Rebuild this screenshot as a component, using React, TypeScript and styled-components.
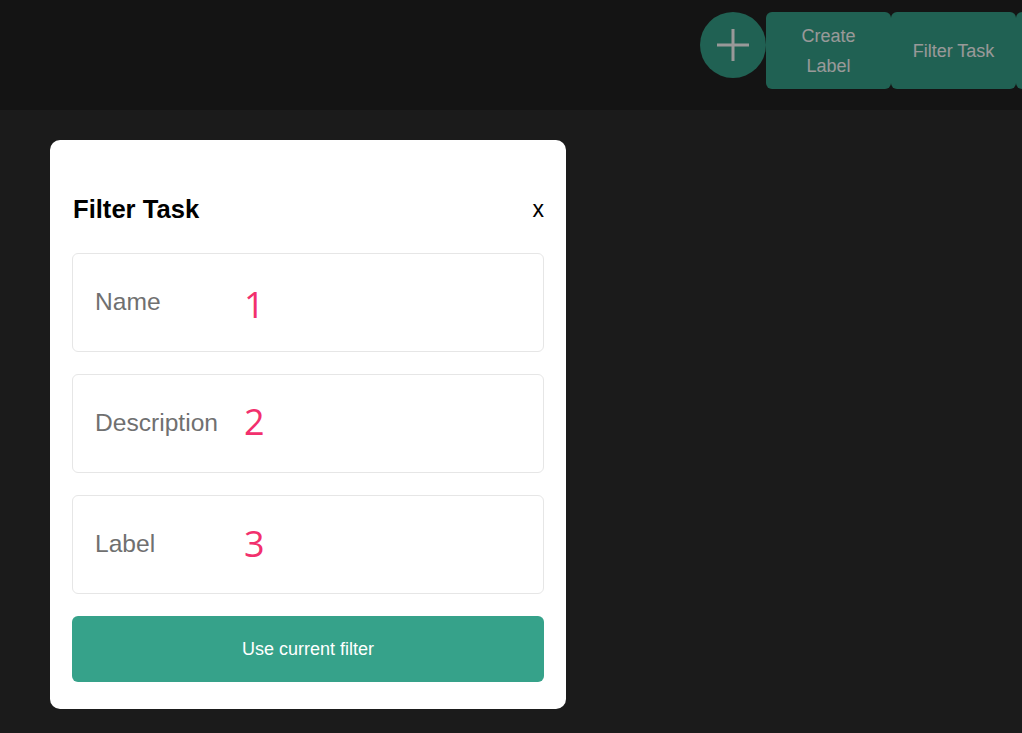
import React from "react";
import styled, { createGlobalStyle } from "styled-components";

const GlobalStyle = createGlobalStyle`
  html, body {
    margin: 0;
    padding: 0;
    height: 100%;
    overflow: hidden;
    background: #2d2d2d;
    font-family: "Liberation Sans", Arial, sans-serif;
  }
  #root { height: 100%; }
  * { box-sizing: border-box; }
`;

const Page = styled.div`
  height: 100%;
  display: flex;
  flex-direction: column;
`;

const Header = styled.header`
  height: 110px;
  flex-shrink: 0;
  background: #222222;
  display: flex;
  align-items: flex-start;
  padding: 12px 0 0 700px;
  overflow: hidden;
`;

const Actions = styled.div`
  display: flex;
  align-items: flex-start;
  flex-shrink: 0;
`;

const AddButton = styled.button`
  width: 66px;
  height: 66px;
  flex-shrink: 0;
  border: none;
  border-radius: 50%;
  background: #36a28a;
  display: flex;
  align-items: center;
  justify-content: center;
  padding: 0;
`;

const HeaderButton = styled.button`
  width: 125px;
  height: 77px;
  flex-shrink: 0;
  border: none;
  border-radius: 6px;
  background: #36a28a;
  color: #ffffff;
  font-family: "Liberation Sans", Arial, sans-serif;
  font-size: 18px;
  line-height: 30px;
  padding: 0 20px;
  text-align: center;
`;

const Main = styled.main`
  flex: 1;
`;

const Overlay = styled.div`
  position: fixed;
  inset: 0;
  background: rgba(0, 0, 0, 0.4);
`;

const Modal = styled.div`
  position: fixed;
  top: 140px;
  left: 50px;
  width: 516px;
  background: #ffffff;
  border-radius: 10px;
  padding: 54px 22px 27px;
  display: flex;
  flex-direction: column;
`;

const ModalHeader = styled.div`
  display: flex;
  align-items: center;
  justify-content: space-between;
  height: 30px;
  margin-bottom: 29px;
`;

const Title = styled.h2`
  margin: 0 0 0 1px;
  font-size: 25.6px;
  line-height: 30px;
  font-weight: 700;
  color: #000000;
`;

const Close = styled.button`
  border: none;
  background: none;
  padding: 0;
  margin: 0;
  font-family: "Liberation Sans", Arial, sans-serif;
  font-size: 23px;
  line-height: 30px;
  color: #000000;
`;

const Fields = styled.div`
  display: flex;
  flex-direction: column;
  gap: 22px;
`;

const Field = styled.div`
  height: 99px;
  border: 1px solid #e6e6e6;
  border-radius: 6px;
  padding: 0 22px;
  display: flex;
  align-items: center;
`;

const FieldLabel = styled.span`
  width: 149px;
  flex-shrink: 0;
  font-size: 24.6px;
  line-height: 30px;
  color: #707070;
  transform: translateY(-1px);
`;

const FieldValue = styled.span<{ $shift: number }>`
  font-family: "Open Sans", "Noto Sans", sans-serif;
  font-size: 36px;
  line-height: 40px;
  color: #f2306d;
  transform: translateY(${(p) => p.$shift}px);
`;

const SubmitButton = styled.button`
  margin-top: 22px;
  height: 66px;
  border: none;
  border-radius: 6px;
  background: #36a28a;
  color: #ffffff;
  font-family: "Liberation Sans", Arial, sans-serif;
  font-size: 18px;
`;

const PlusIcon = () => (
  <svg width="34" height="34" viewBox="0 0 34 34">
    <path d="M17 1v32M1 17h32" stroke="#ffffff" strokeWidth="3" fill="none" />
  </svg>
);

const fields = [
  { label: "Name", value: "1", shift: 2 },
  { label: "Description", value: "2", shift: -2 },
  { label: "Label", value: "3", shift: -1 },
];

export default function App() {
  return (
    <>
      <GlobalStyle />
      <Page>
        <Header>
          <Actions>
            <AddButton aria-label="Add task">
              <PlusIcon />
            </AddButton>
            <HeaderButton>Create Label</HeaderButton>
            <HeaderButton>Filter Task</HeaderButton>
            <HeaderButton aria-label="More actions" />
          </Actions>
        </Header>
        <Main />
      </Page>
      <Overlay />
      <Modal>
        <ModalHeader>
          <Title>Filter Task</Title>
          <Close>x</Close>
        </ModalHeader>
        <Fields>
          {fields.map((f) => (
            <Field key={f.label}>
              <FieldLabel>{f.label}</FieldLabel>
              <FieldValue $shift={f.shift}>{f.value}</FieldValue>
            </Field>
          ))}
        </Fields>
        <SubmitButton>Use current filter</SubmitButton>
      </Modal>
    </>
  );
}
